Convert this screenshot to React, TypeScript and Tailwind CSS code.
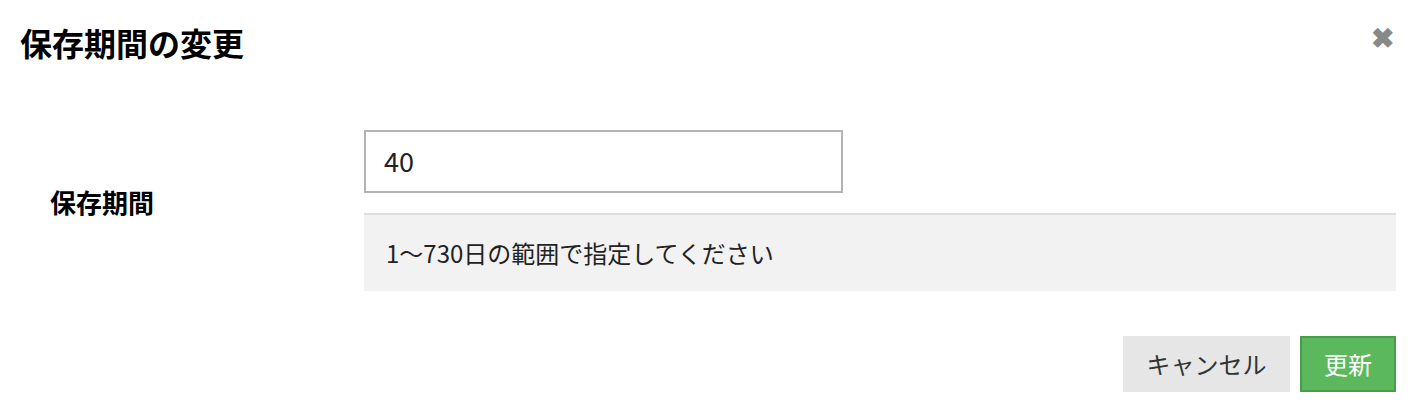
import React from "react";

const jp = { fontFamily: '"Noto Sans CJK JP", "Noto Sans", sans-serif' };

export default function App() {
  return (
    <div
      className="w-[1414px] h-[408px] bg-white text-[#111] flex flex-col"
      style={jp}
    >
      {/* HEADER */}
      <div className="flex items-start justify-between pl-[20px] pr-[20px] pt-[21px]">
        <h1 className="text-[32px] leading-[42px] font-bold text-black">保存期間の変更</h1>
        <button className="mt-[-1px] text-[#888] text-[28px] leading-[32px] font-bold">✖</button>
      </div>

      {/* FORM */}
      <div className="flex mt-[67px]">
        <div className="w-[364px] pl-[50px] pt-[55px] shrink-0">
          <span className="text-[26px] leading-[34px] font-bold text-black">保存期間</span>
        </div>
        <div className="flex flex-col w-[1032px]">
          <div className="w-[479px] h-[63px] border-2 border-[#b4b4b4] flex items-center px-[18px]">
            <span className="text-[27px] text-[#222]">40</span>
          </div>
          <div className="mt-[20px] h-[78px] bg-[#f2f2f2] border-t-2 border-[#dedede] flex items-center px-[22px]">
            <span className="text-[24px] text-[#222]">1〜730日の範囲で指定してください</span>
          </div>
        </div>
      </div>

      {/* FOOTER */}
      <div className="flex justify-end gap-[10px] pr-[18px] mt-[45px]">
        <button className="w-[167px] h-[56px] bg-[#e6e6e6] text-[#333] text-[24px]">キャンセル</button>
        <button className="w-[96px] h-[56px] bg-[#5cb85c] border-2 border-[#4a9d4a] text-white text-[24px]">更新</button>
      </div>
    </div>
  );
}
